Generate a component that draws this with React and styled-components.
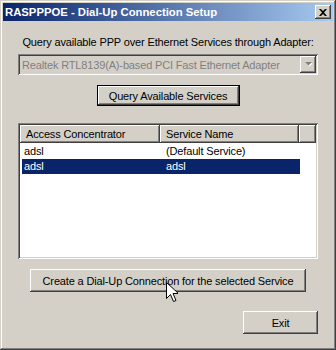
import React from "react";
import styled, { createGlobalStyle, css } from "styled-components";

const GlobalStyle = createGlobalStyle`
  html, body {
    margin: 0;
    padding: 0;
    background: #d4d0c8;
  }
  * {
    box-sizing: border-box;
  }
`;

const raised = css`
  box-shadow: inset -1px -1px #404040, inset 1px 1px #ffffff,
    inset -2px -2px #808080, inset 2px 2px #d4d0c8;
`;

const sunken = css`
  box-shadow: inset 1px 1px #808080, inset -1px -1px #ffffff,
    inset 2px 2px #404040, inset -2px -2px #d4d0c8;
`;

const rows = [
  { ac: "adsl", service: "(Default Service)", selected: false },
  { ac: "adsl", service: "adsl", selected: true },
];

const App = () => {
  return (
    <>
      <GlobalStyle />
      <Window>
        <TitleBar>
          <Title>RASPPPOE - Dial-Up Connection Setup</Title>
          <CloseBtn>
            <svg width="8" height="7" viewBox="0 0 8 7">
              <path
                d="M0 0h2l2 2 2-2h2L5 3.5 8 7H6L4 5 2 7H0l3-3.5z"
                fill="#000"
              />
            </svg>
          </CloseBtn>
        </TitleBar>
        <Body>
          <Label>Query available PPP over Ethernet Services through Adapter:</Label>
          <Combo>
            <ComboText>Realtek RTL8139(A)-based PCI Fast Ethernet Adapter</ComboText>
            <ComboArrow>
              <svg width="7" height="5" viewBox="0 0 7 5">
                <path d="M1 1h7L4.5 4.5z" fill="#fff" />
                <path d="M0 0h7L3.5 3.5z" fill="#808080" />
              </svg>
            </ComboArrow>
          </Combo>
          <ButtonRow>
            <Button $default $width={143} $height={21}>
              Query Available Services
            </Button>
          </ButtonRow>
          <ListView>
            <Header>
              <HeaderCell $width={140}>Access Concentrator</HeaderCell>
              <HeaderCell $width={139}>Service Name</HeaderCell>
              <HeaderCell $width={17} />
            </Header>
            <Rows>
              {rows.map((r, i) => (
                <Row key={i} $selected={r.selected}>
                  <Cell $width={142}>{r.ac}</Cell>
                  <Cell $width={136}>{r.service}</Cell>
                </Row>
              ))}
            </Rows>
          </ListView>
          <ButtonRow $top={10}>
            <Button $width={276} $height={23}>
              Create a Dial-Up Connection for the selected Service
            </Button>
          </ButtonRow>
          <ButtonRow $top={19} $right>
            <Button $width={75} $height={23}>
              Exit
            </Button>
          </ButtonRow>
        </Body>
        <Cursor width="12" height="21" viewBox="0 0 12 21">
          <path
            d="M0.5 0.5v16l4-4 3 7 2.5-1-3-7h5.5z"
            fill="#fff"
            stroke="#000"
            strokeWidth="1"
          />
        </Cursor>
      </Window>
    </>
  );
};

export default App;

const Window = styled.div`
  position: relative;
  width: 336px;
  height: 350px;
  padding: 3px;
  background: #d4d0c8;
  font-family: "Liberation Sans", Arial, sans-serif;
  font-size: 11px;
  letter-spacing: -0.15px;
  color: #000;
  box-shadow: inset -1px -1px #404040, inset 1px 1px #d4d0c8,
    inset -2px -2px #808080, inset 2px 2px #ffffff;
`;

const TitleBar = styled.div`
  height: 18px;
  display: flex;
  align-items: center;
  justify-content: space-between;
  padding: 0 2px 0 2px;
  background: linear-gradient(to right, #0a246a, #a6caf0);
`;

const Title = styled.div`
  color: #fff;
  font-family: "Liberation Sans", Arial, sans-serif;
  font-weight: bold;
  font-size: 11.3px;
  letter-spacing: 0;
`;

const CloseBtn = styled.div`
  width: 16px;
  height: 14px;
  display: flex;
  align-items: center;
  justify-content: center;
  background: #d4d0c8;
  ${raised};
`;

const Body = styled.div`
  display: flex;
  flex-direction: column;
  padding: 15px 15px 0 15px;
`;

const Label = styled.div`
  height: 13px;
  line-height: 13px;
  text-align: center;
  white-space: nowrap;
`;

const Combo = styled.div`
  margin-top: 5px;
  height: 21px;
  width: 300px;
  display: flex;
  align-items: center;
  justify-content: space-between;
  padding: 2px;
  background: #d4d0c8;
  ${sunken};
`;

const ComboText = styled.span`
  padding-left: 2px;
  color: #808080;
  white-space: nowrap;
`;

const ComboArrow = styled.div`
  width: 16px;
  height: 17px;
  display: flex;
  align-items: center;
  justify-content: center;
  background: #d4d0c8;
  ${raised};
`;

const ButtonRow = styled.div`
  display: flex;
  justify-content: ${(p) => (p.$right ? "flex-end" : "center")};
  margin-top: ${(p) => (p.$top ?? 10)}px;
`;

const Button = styled.div`
  width: ${(p) => p.$width}px;
  height: ${(p) => p.$height}px;
  display: flex;
  align-items: center;
  justify-content: center;
  background: #d4d0c8;
  white-space: nowrap;
  ${(p) =>
    p.$default
      ? css`
          box-shadow: inset 0 0 0 1px #000, inset -2px -2px #404040,
            inset 2px 2px #ffffff, inset -3px -3px #808080;
        `
      : raised};
`;

const ListView = styled.div`
  margin-top: 17px;
  width: 300px;
  height: 136px;
  padding: 2px;
  background: #fff;
  ${sunken};
`;

const Header = styled.div`
  display: flex;
  height: 18px;
`;

const HeaderCell = styled.div`
  width: ${(p) => p.$width}px;
  flex: none;
  height: 18px;
  line-height: 18px;
  padding-left: 6px;
  background: #d4d0c8;
  white-space: nowrap;
  ${raised};
`;

const Rows = styled.div`
  padding: 1px 0 0 2px;
`;

const Row = styled.div`
  display: flex;
  height: 15px;
  line-height: 15px;
  width: 278px;
  background: ${(p) => (p.$selected ? "#0a246a" : "transparent")};
  color: ${(p) => (p.$selected ? "#fff" : "#000")};
`;

const Cell = styled.div`
  width: ${(p) => p.$width}px;
  padding-left: 2px;
  white-space: nowrap;
`;

const Cursor = styled.svg`
  position: absolute;
  left: 166px;
  top: 282px;
`;
